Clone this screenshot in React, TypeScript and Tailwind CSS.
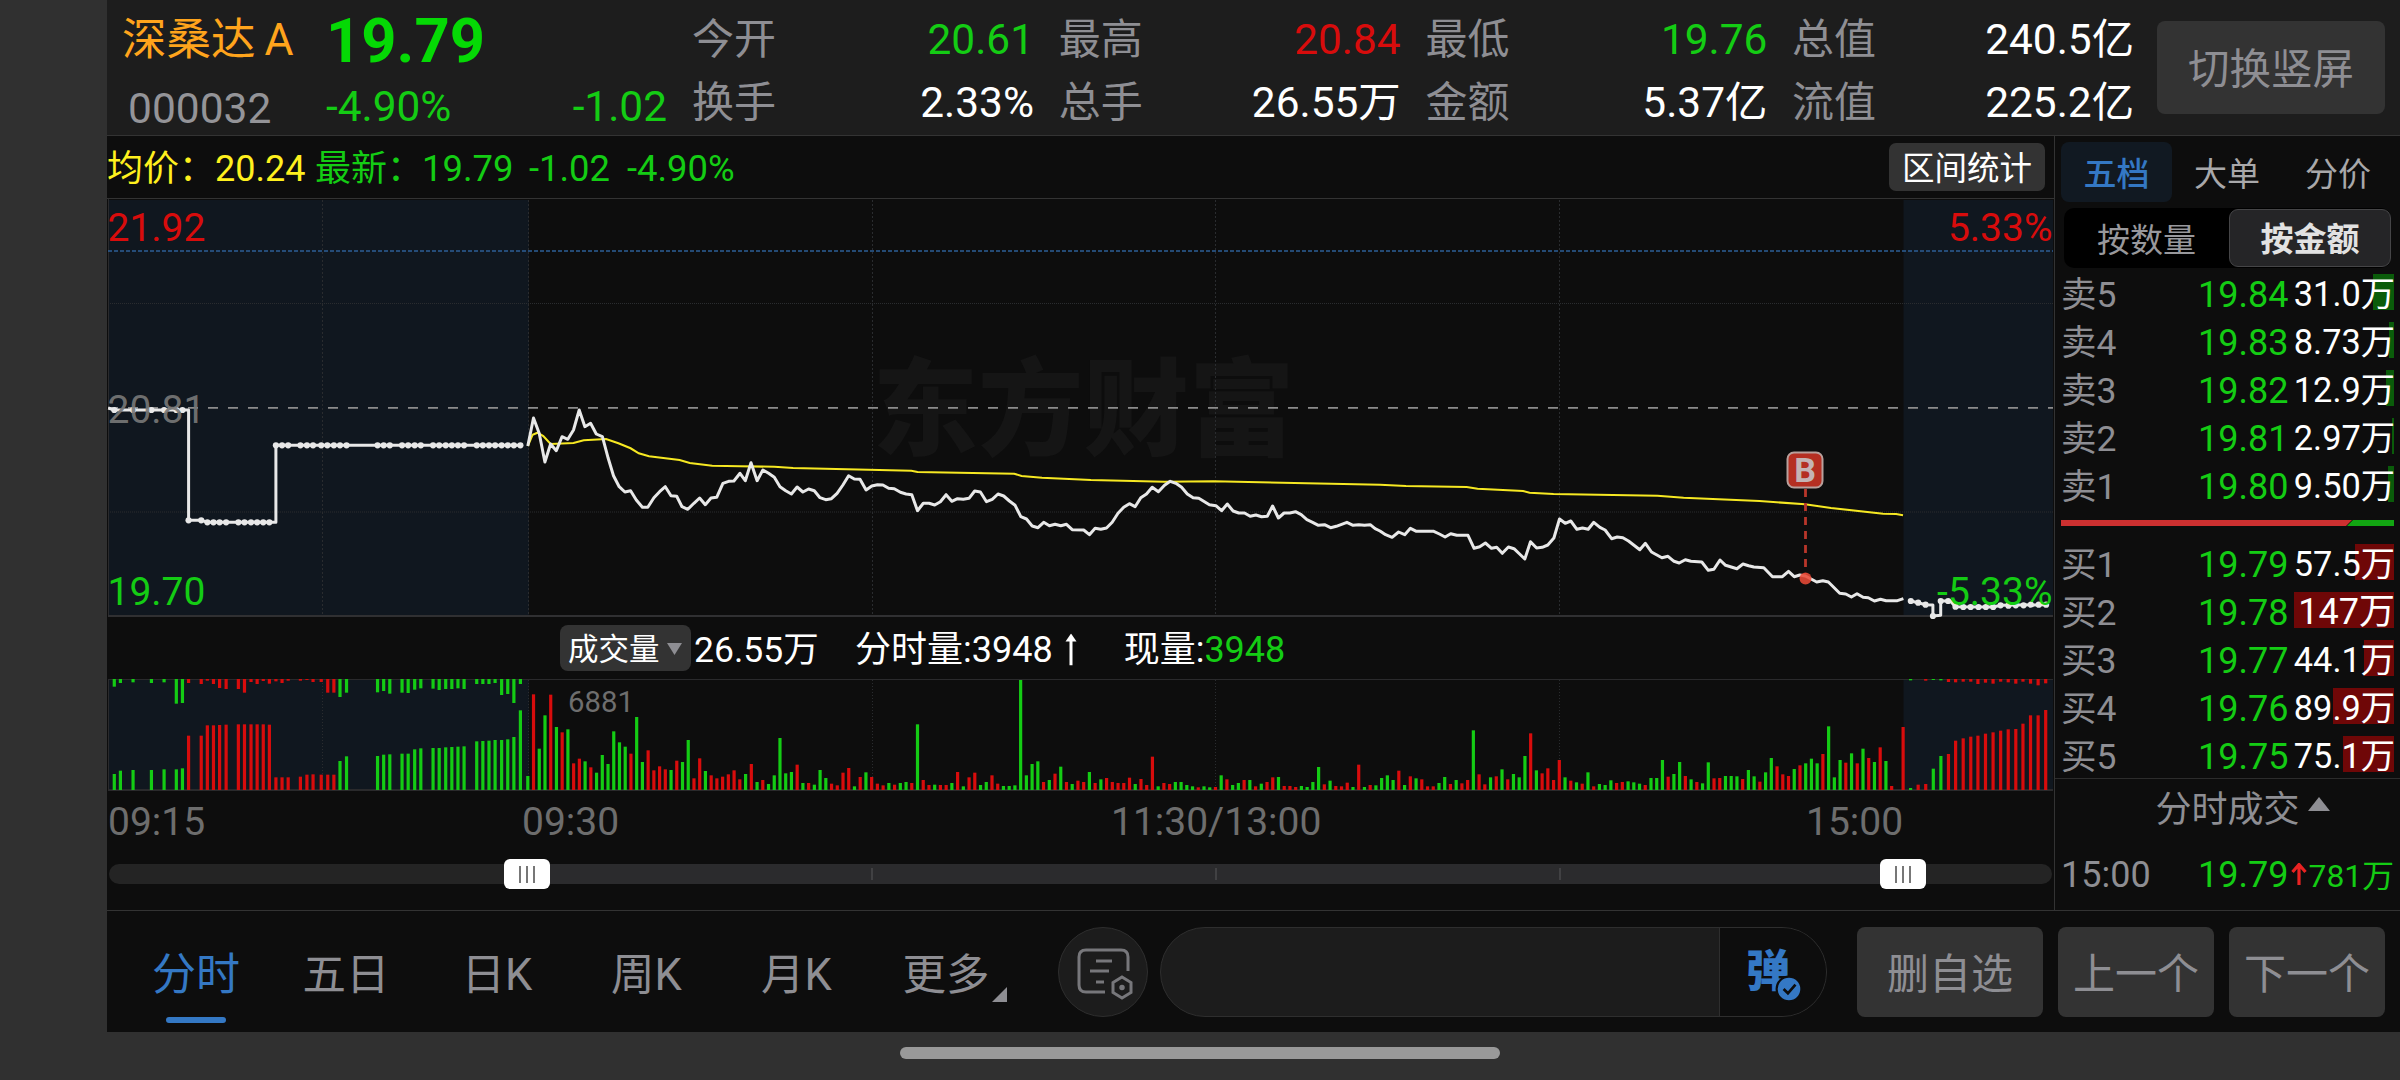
import React from "react";

type Pt = [number, number];

const GREEN = "#14cc14";
const RED = "#d80c0c";

/** Parses "x,y x,y ..." and maps it from local units to chart pixels. */
function plot(data: string, x0: number, sx: number, y0: number): Pt[] {
  return data
    .trim()
    .split(/\s+/)
    .map((p) => {
      const [x, y] = p.split(",").map(Number);
      return [x0 + x * sx, y0 + y / 3] as Pt;
    });
}

const join = (pts: Pt[]) => pts.map(([x, y]) => `${x.toFixed(1)},${y.toFixed(1)}`).join(" ");

const price: Pt[] = [
  ...plot(
    "1048,348 1062,264 1076,310 1090,396 1104,342 1118,362 1132,320 1146,328 1160,300 1174,240 1188,290 1202,280 1216,312 1231,320 1245,385 1258,437 1272,470 1286,486 1300,482 1314,510 1329,532 1342,532 1357,503 1371,485 1385,470 1399,497 1413,499 1426,530 1440,538 1455,520 1469,504 1483,524 1497,504 1511,502 1526,460 1540,454 1553,453",
    100, 0.40816, 330,
  ),
  ...plot(
    "0,430 13,452 27,398 42,452 56,420 70,430 84,442 98,470 112,482 126,492 140,471 154,486 168,477 182,482 196,503 210,509 224,506 238,490 252,465 266,437 280,447 294,448 309,480 323,468 337,464 350,465 364,475 378,476 393,487 407,492 421,494 435,542 449,520 463,520 477,525 491,515 505,494 519,514 533,506 547,508 561,505 575,483 589,486 604,515 618,508 632,492 646,498 660,513 674,526 688,560 702,567 716,588 730,593 744,577 758,587 772,583 786,587 800,583 814,599 842,600 856,614 870,595 884,598 898,594 912,577 926,550 940,532 954,521 968,530 982,503 996,492 1010,472 1025,485 1040,466 1054,454 1068,460 1082,472 1096,492 1110,503 1124,505 1150,524 1166,527 1180,542 1194,522 1208,543 1222,549 1236,549 1250,559 1264,555 1278,560 1292,559 1305,528 1319,564 1333,549 1347,549 1361,545 1375,554 1389,569 1403,577 1417,586 1432,584 1447,593 1461,589 1487,577 1502,586 1516,584 1530,586 1544,584 1556,596",
    740, 0.40816, 330,
  ),
  ...plot(
    "0,603 13,614 28,622 43,606 57,614 70,595 84,604 124,604 137,612 150,621 163,611 177,616 203,616 217,655 230,650 243,639 257,655 269,652 282,670 296,651 309,656 322,672 334,687 347,635 361,654 374,652 387,645 401,624 414,567 427,580 440,573 454,598 467,594 480,598 493,577 507,592 519,600 534,626 547,621 560,623 573,633 599,659 612,640 626,666 650,683 664,679 678,694 690,699 704,689 717,694 742,696 757,721 770,718 784,690 797,706 823,716 837,702 850,707 862,711 885,713 905,740 928,740 942,724 955,740 968,735 981,738 1007,756 1021,752 1034,756 1060,790 1074,792 1087,801 1100,791 1114,802 1126,803 1140,813 1154,808 1167,812 1193,812 1207,806",
    1380, 0.43367, 330,
  ),
];

const average: Pt[] = [
  ...plot("1048,348 1060,314 1072,308 1086,318 1104,342 1160,339 1185,331 1240,327 1270,340 1300,355 1320,370 1345,379 1420,390 1445,399 1500,407", 100, 0.40816, 330),
  ...plot("0,409 84,410 130,414 420,422 435,426 672,431 690,438 740,443 860,450 1040,455 1160,454", 740, 0.40816, 330),
  ...plot("0,464 60,468 200,471 225,476 330,483 345,488 400,492 640,497 700,503 875,513 980,523 1040,534 1160,551 1190,552 1206,556", 1380, 0.43367, 330),
];

const preLine = plot("20,234 35,240 217,240 217,571 250,571 263,577 431,577 431,346 1036,346", 100, 0.40816, 330);
const preDots = [
  ...plot("35,240 81,240 126,240 157,240 187,240 202,240 217,571 248,571", 100, 0.40816, 330),
  ...plot("263,577 278,577 293,577 309,577 339,577 354,577 370,577 385,577 400,577 415,577", 100, 0.40816, 330),
  ...plot("431,346 446,346 461,346 491,346 507,346 522,346 542,346 557,346 573,346 588,346 604,346 680,346 695,346 710,346 740,346 755,346 771,346 786,346 816,346 831,346 847,346 862,346 877,346 892,346 923,346 938,346 953,346 968,346 984,346 999,346 1014,346 1030,346", 100, 0.40816, 330),
];
const postLine = plot("1224,813 1241,818 1258,824 1275,825 1275,858 1293,856 1293,813 1315,813 1327,830 1414,831 1431,826 1536,824", 1380, 0.43367, 330);
const postDots = plot(
  "1224,813 1241,818 1258,824 1275,858 1293,813 1310,813 1327,830 1345,831 1362,831 1380,831 1397,831 1414,831 1431,826 1449,827 1466,826 1484,826 1501,824 1519,824 1536,824",
  1380, 0.43367, 330,
);

type Bar = { x: number; top: number; bottom: number; up: boolean };
const BASE = 790;
const CEIL = 679;

/** One volume bar per minute; each token is a colour letter and the bar's top. */
function minuteBars(data: string, start: number, step: number): Bar[] {
  return data
    .trim()
    .split(/\s+/)
    .map((t, i) => ({
      x: start + i * step,
      top: 620 + Number(t.slice(1)) / 3,
      bottom: BASE,
      up: t[0] === "r",
    }));
}

/** Auction bars: "x,colour,upperEnd,lowerTop" for matched and unmatched volume. */
function auctionBars(data: string, x0: number, sx: number): Bar[] {
  return data
    .trim()
    .split(/\s+/)
    .flatMap((t) => {
      const [x, c, hi, lo] = t.split(",");
      const px = x0 + Number(x) * sx;
      const up = c === "r";
      const out: Bar[] = [{ x: px, top: 620 + Number(lo) / 3, bottom: BASE, up }];
      if (Number(hi) > 0) out.push({ x: px, top: CEIL, bottom: 620 + Number(hi) / 3, up });
      return out;
    });
}

const bars: Bar[] = [
  ...auctionBars(
    "35,g,200,462 50,g,189,452 81,g,187,450 126,g,189,450 157,g,187,448 187,g,251,448 202,g,249,445 217,r,189,347 248,r,192,347 263,r,182,316 278,r,192,316 293,r,204,315 309,r,207,314 339,r,207,313 354,r,218,313 370,r,186,313 385,r,192,313 400,r,183,313 415,r,191,314 431,r,184,472 446,r,189,472 461,r,182,472 491,r,182,470 507,r,180,464 522,r,186,463 542,r,186,464 558,r,218,464 573,r,218,464 588,g,231,423 604,g,218,409 680,g,217,408 695,g,213,404 710,g,221,403 740,g,218,401 755,g,219,401 771,g,209,388 786,g,205,385 816,g,206,384 831,g,210,384 847,g,207,382 862,g,207,381 877,g,205,380 892,g,207,379 923,g,192,364 938,g,192,363 953,g,192,362 968,g,189,360 984,g,225,360 999,g,222,358 1014,g,249,351 1030,g,192,271",
    100, 0.40816,
  ),
  ...minuteBars(
    "g468 r223 g386 g286 r224 g321 r337 g328 r430 r416 g424 r442 g458 g405 g432 g334 g367 g380 r401 g291 g426 r391 r451 r439 r448 g450 r422 g426 g360 r475 r415 g453 r466 r475 r470 r463 r451 r478",
    527.8, 5.73,
  ),
  ...minuteBars(
    "g462 r432 g486 r480 g492 g466 g354 g460 g456 r434 g489 r489 g494 g450 g474 r491 r496 r458 r444 g499 r471 g457 r471 r491 r496 g489 r494 g489 g486 r489 g313 r480 r495 g494 r495 r495 g489 r456 g499 r472 r458 g495 g486 r466 r491 g498 g498 g496 g180 g466 g432 g424 r486 g480 r461 g440 r486 g492 r482 r486 g456 r489 g478 r474 r486 r489 r489 r473 g492 r477 r495 r410 g499 r489 r492 g486 g486 g495 g499 r502 g499 g502 r501 g466 r478 g495 g489 r480 g480 r499 g491 r486 r472 g471 r498 r498 r501 g498 g501 g486 g441 r493 g482 r498 r499 r488 g501 r434 g501 r495 g496 g474 g466 g480 r452",
    745.6, 5.73,
  ),
  ...minuteBars(
    "g495 r469 g475 r478 r499 r499 g489 g471 r492 g480 r490 r480 g331 r463 r493 g472 r469 g448 r478 g462 g472 g408 r340 g451 r460 r445 r480 r420 g472 r482 g487 r491 g457 r499 g492 g495 g481 r489 r486 g484 g487 g491 r495 g474 g474 g420 r470 g462 g426 r468 g478 r486 g490 g427 r475 r474 g468 g468 g469 r477 g450 g469 r485 g457 g414 r439 r463 r468 g447 r436 g430 g416 g430 r402 g319 g472 g420 r428 g400 r430 g386 r414 g426 r382 g423 r498 r510 r321",
    1404.6, 5.73,
  ),
  ...auctionBars(
    "1213,g,181,504 1231,r,0,494 1249,r,182,492 1267,g,180,446 1285,g,181,408 1303,r,186,402 1320,r,187,362 1338,r,185,355 1356,r,185,350 1373,r,192,347 1391,r,188,341 1409,r,191,337 1427,r,185,332 1445,r,187,328 1463,r,191,327 1480,r,185,311 1498,r,191,286 1516,r,196,286 1534,r,190,270",
    1400, 0.42092,
  ),
];

const GRID_X = [322.5, 528.5, 872.5, 1215.5, 1559.5];

const stats = [
  { label: "今开", value: "20.61", tone: "text-[#14cc14]", label2: "换手", value2: "2.33%" },
  { label: "最高", value: "20.84", tone: "text-[#d80c0c]", label2: "总手", value2: "26.55万" },
  { label: "最低", value: "19.76", tone: "text-[#14cc14]", label2: "金额", value2: "5.37亿" },
  { label: "总值", value: "240.5亿", tone: "text-white", label2: "流值", value2: "225.2亿" },
];

const asks = [
  { name: "卖5", price: "19.84", qty: "31.0万", depth: 21 },
  { name: "卖4", price: "19.83", qty: "8.73万", depth: 5 },
  { name: "卖3", price: "19.82", qty: "12.9万", depth: 8 },
  { name: "卖2", price: "19.81", qty: "2.97万", depth: 2 },
  { name: "卖1", price: "19.80", qty: "9.50万", depth: 6 },
];
const bids = [
  { name: "买1", price: "19.79", qty: "57.5万", depth: 39 },
  { name: "买2", price: "19.78", qty: "147万", depth: 100 },
  { name: "买3", price: "19.77", qty: "44.1万", depth: 30 },
  { name: "买4", price: "19.76", qty: "89.9万", depth: 61 },
  { name: "买5", price: "19.75", qty: "75.1万", depth: 51 },
];

function Header() {
  return (
    <header className="flex h-[136px] shrink-0 border-b border-[#333] bg-[#1d1d1d] text-[42px]">
      <div className="w-[219px] pl-[15px]">
        <div className="mt-[12px] h-[56px] text-[44.5px] leading-[56px] whitespace-nowrap text-[#ffa41c]">
          深桑达<span className="ml-[9px]">A</span>
        </div>
        <div className="mt-[13px] pl-[6px] text-[42.5px] leading-[56px] text-[#949498]">000032</div>
      </div>
      <div className="w-[341px]">
        <div className="mt-[9px] h-[64px] text-[61.5px] leading-[64px] font-bold text-[#05d905]">19.79</div>
        <div className="mt-[6px] flex justify-between text-[42.4px] leading-[56px] text-[#14cc14]">
          <span>-4.90%</span>
          <span>-1.02</span>
        </div>
      </div>
      <div className="ml-[25px] flex gap-[24.7px]">
        {stats.map((s) => (
          <div key={s.label} className="w-[342px]">
            <div className="mt-[12px] flex justify-between leading-[56px]">
              <span className="text-[#8e8e93]">{s.label}</span>
              <span className={`text-[42.4px] ${s.tone}`}>{s.value}</span>
            </div>
            <div className="mt-[7px] flex justify-between leading-[56px]">
              <span className="text-[#8e8e93]">{s.label2}</span>
              <span className="text-[42.4px] text-white">{s.value2}</span>
            </div>
          </div>
        ))}
      </div>
      <button className="mt-[21px] mr-[15px] ml-auto h-[93px] w-[228px] rounded-[8px] bg-[#333] pt-[6px] text-[41.5px] text-[#8e8e93]">
        切换竖屏
      </button>
    </header>
  );
}

function PriceChart() {
  return (
    <svg className="block h-[418px] w-[1947px] shrink-0 overflow-visible" viewBox="107 199 1947 418">
      <rect x="108" y="200" width="421" height="416" fill="#10171f" />
      <rect x="1903.5" y="200" width="149.5" height="416" fill="#10171f" />
      <text x="1083.5" y="447" textAnchor="middle" fontSize="105.5" fontWeight="900" fill="#151515">
        东方财富
      </text>
      <g stroke="#2a2c2f" strokeWidth="1" strokeDasharray="2 2">
        {GRID_X.map((x) => (
          <line key={x} x1={x} x2={x} y1="200" y2="616" />
        ))}
        <line x1="108" x2="2053" y1="303.5" y2="303.5" strokeDasharray="1 1" />
        <line x1="108" x2="2053" y1="512" y2="512" strokeDasharray="1 1" />
      </g>
      <line x1="108.5" x2="108.5" y1="199" y2="616" stroke="#2a2a2c" />
      <line x1="108" x2="2053" y1="251" y2="251" stroke="#2d5f96" strokeWidth="1.3" strokeDasharray="4 2" />
      <line x1="108" x2="2053" y1="407.8" y2="407.8" stroke="#8c8c8c" strokeWidth="1.8" strokeDasharray="10 10" />
      <line x1="108" x2="2053" y1="616" y2="616" stroke="#303032" strokeWidth="2" />
      <polyline points={join(average)} fill="none" stroke="#f6e822" strokeWidth="2.1" />
      <g fill="none" stroke="#e8e8e8" strokeWidth="3" strokeLinejoin="round">
        <polyline points={join(price)} />
        <polyline points={join(preLine)} />
        <polyline points={join(postLine)} />
      </g>
      <g fill="#e8e8e8">
        {[...preDots, ...postDots].map(([x, y], i) => (
          <circle key={i} cx={x} cy={y} r="3.1" />
        ))}
      </g>
      <line x1="1805.5" x2="1805.5" y1="489" y2="574" stroke="#b8362a" strokeWidth="2.8" strokeDasharray="8 6" />
      <circle cx="1805.5" cy="578.5" r="6" fill="#e84a37" fillOpacity="0.88" />
      <rect x="1787.5" y="452.5" width="35" height="35" rx="6.5" fill="#b52f22" stroke="#b8a09c" strokeWidth="2" />
      <text x="1805" y="482" textAnchor="middle" fontSize="34" fontWeight="700" fill="#c4b4b4">B</text>
      <g fontSize="39">
        <text x="107.5" y="241" fill={RED}>21.92</text>
        <text x="107.5" y="423" fill="#777" fillOpacity="0.92">20.81</text>
        <text x="107.5" y="605" fill={GREEN}>19.70</text>
        <text x="2052.5" y="241" textAnchor="end" fill={RED}>5.33%</text>
        <text x="2052.5" y="605" textAnchor="end" fill={GREEN}>-5.33%</text>
      </g>
    </svg>
  );
}

function VolumeChart() {
  return (
    <svg className="block h-[113px] w-[1947px] shrink-0" viewBox="107 679 1947 113">
      <rect x="108" y="680" width="421" height="110" fill="#10171f" />
      <rect x="1903.5" y="680" width="149.5" height="110" fill="#10171f" />
      <g stroke="#2a2c2f" strokeDasharray="1 2">
        {GRID_X.map((x) => (
          <line key={x} x1={x} x2={x} y1="680" y2="790" />
        ))}
      </g>
      <line x1="108" x2="2053" y1="679.5" y2="679.5" stroke="#2a2a2c" />
      <line x1="108.5" x2="108.5" y1="679" y2="791" stroke="#2a2a2c" />
      <line x1="108" x2="2053" y1="790" y2="790" stroke="#2a2a2c" strokeWidth="2" />
      {bars.map((b, i) => (
        <rect key={i} x={b.x - 1.6} y={b.top} width="3.2" height={Math.max(0, b.bottom - b.top)} fill={b.up ? RED : GREEN} />
      ))}
      <text x="568" y="712" fontSize="29.3" fill="#6e6e6e">6881</text>
    </svg>
  );
}

function Thumb() {
  return (
    <div className="flex h-[30px] w-[46px] shrink-0 items-center justify-center gap-[5px] rounded-[6px] bg-white">
      <i className="h-[17px] w-[2px] bg-[#777]" />
      <i className="h-[17px] w-[2px] bg-[#777]" />
      <i className="h-[17px] w-[2px] bg-[#777]" />
    </div>
  );
}

function RangeSlider() {
  return (
    <div className="mt-[12px] flex h-[30px] w-[1947px] items-center pl-[2px]">
      <div className="h-[20px] w-[395px] shrink-0 rounded-l-full bg-[#242424]" />
      <Thumb />
      <div className="flex h-[20px] w-[1330px] shrink-0 items-center bg-[#2b2b2d]">
        <i className="ml-[321px] h-[12px] w-[2px] bg-[#414143]" />
        <i className="ml-[342px] h-[12px] w-[2px] bg-[#414143]" />
        <i className="ml-[342px] h-[12px] w-[2px] bg-[#414143]" />
      </div>
      <Thumb />
      <div className="h-[20px] w-[126px] shrink-0 rounded-r-full bg-[#242424]" />
    </div>
  );
}

function ChartPanel() {
  return (
    <section className="flex w-[1947px] shrink-0 flex-col">
      <div className="flex h-[63px] shrink-0 items-center border-b border-[#333] text-[36px] leading-[62px] whitespace-pre">
        <div className="flex translate-y-[1.5px] text-[#14cc14]">
          <span className="w-[208px] text-[#fff01e]">均价：20.24</span>
          <span className="w-[107px]">最新：</span>
          <span className="w-[107px] text-[36.4px]">19.79</span>
          <span className="w-[98px] text-[36.4px]">-1.02</span>
          <span className="text-[36.4px]">-4.90%</span>
        </div>
        <button className="mr-[9px] ml-auto h-[48px] w-[156px] rounded-[7px] bg-[#333] pt-[2px] text-[32.5px] leading-[48px] text-white">
          区间统计
        </button>
      </div>
      <PriceChart />
      <div className="flex h-[62px] shrink-0 items-center pl-[453px] text-[36px] leading-[62px] text-white">
        <button className="flex h-[46px] w-[131px] shrink-0 items-center rounded-[8px] bg-[#333] pt-[3px] pl-[8px] text-[30.5px] leading-[44px]">
          成交量
          <svg className="mb-[2px] ml-[7px] h-[12px] w-[15px]" viewBox="0 0 15 12">
            <path d="M0 0h15L7.500 12z" fill="#8e8e93" />
          </svg>
        </button>
        <div className="flex flex-1 translate-y-[1.5px] items-center">
          <span className="ml-[3px] w-[161px] text-[35.5px]">26.55万</span>
          <span>分时量:3948</span>
          <svg className="mb-[1px] ml-[12px] h-[32px] w-[12px]" viewBox="0 0 12 32">
            <path d="M6 0l5.500 8H.5z" fill="#fff" />
            <path d="M6 5v27" stroke="#fff" strokeWidth="3" />
          </svg>
          <span className="ml-[47px]">现量:</span>
          <span className="text-[#14cc14]">3948</span>
        </div>
      </div>
      <VolumeChart />
      <div className="relative h-[55px] shrink-0 text-[39px] leading-[61px] text-[#6d6d6d]">
        <span className="absolute left-px">09:15</span>
        <span className="absolute left-[415px]">09:30</span>
        <span className="absolute left-[1004px]">11:30/13:00</span>
        <span className="absolute left-[1699px]">15:00</span>
      </div>
      <RangeSlider />
    </section>
  );
}

type Level = { name: string; price: string; qty: string; depth: number };

function BookRow({ level, tone }: { level: Level; tone: string }) {
  return (
    <div className="relative flex h-[48px] items-center text-[36px] leading-[48px]">
      <span className="w-[137px] translate-y-[2.5px] text-[35.5px] text-[#8e8e93]">{level.name}</span>
      <span className="translate-y-[2.5px] text-[#14cc14]">{level.price}</span>
      <span className={`absolute top-[6px] right-[6px] h-[36px] ${tone}`} style={{ width: level.depth }} />
      <span
        className={`relative mr-[5px] ml-auto translate-y-[1.5px] text-white ${level.qty.length > 4 ? "text-[34.3px]" : "text-[36px]"}`}
      >
        {level.qty}
      </span>
    </div>
  );
}

function OrderPanel() {
  return (
    <aside className="flex flex-1 flex-col border-l border-[#333] pl-[6px]">
      <div className="mt-[6px] flex h-[60px] shrink-0 text-[33px] leading-[65px] text-[#a8a8aa]">
        <span className="h-[60px] w-[111px] rounded-[8px] bg-[#111922] text-center font-medium text-[#3478c4]">五档</span>
        <span className="ml-[22px]">大单</span>
        <span className="ml-[45px]">分价</span>
      </div>
      <div className="mt-[6px] ml-[3px] flex h-[60px] w-[327px] shrink-0 rounded-[10px] bg-black text-center text-[33px] leading-[65px] text-[#98989c]">
        <span className="w-[165px]">按数量</span>
        <span className="my-px h-[58px] w-[162px] rounded-[9px] border border-[#454547] bg-[#252527] leading-[60px] font-bold text-[#e2e2e2]">
          按金额
        </span>
      </div>
      <div className="h-[240px] shrink-0">
        {asks.map((l) => (
          <BookRow key={l.name} level={l} tone="bg-[#0a5c0a]" />
        ))}
      </div>
      <svg className="mt-[12px] h-[6px] w-[333px] shrink-0" viewBox="0 0 333 6">
        <path d="M0 0h291l-6 6H0z" fill="#cc3030" />
        <path d="M292 0h41v6H286z" fill="#12a512" />
      </svg>
      <div className="mt-[12px] h-[240px] shrink-0">
        {bids.map((l) => (
          <BookRow key={l.name} level={l} tone="bg-[#6f0707]" />
        ))}
      </div>
      <div className="-ml-[6px] flex h-[61px] shrink-0 items-start justify-center border-t border-[#2c2c2c] text-[36px] leading-[63px] text-[#8e8e93]">
        <span className="ml-[30px]">分时成交</span>
        <svg className="mt-[18px] ml-[8px] h-[14px] w-[22px]" viewBox="0 0 22 14">
          <path d="M11 0l11 14H0z" fill="#8e8e93" />
        </svg>
      </div>
      <div className="mt-[12px] flex h-[48px] items-center text-[36px] leading-[48px]">
        <span className="w-[137px] text-[#8e8e93]">15:00</span>
        <span className="text-[#14cc14]">19.79</span>
        <svg className="mb-[3px] ml-[3px] h-[22px] w-[16px]" viewBox="0 0 16 22">
          <path d="M8 22V2M1.500 9L8 1.500 14.500 9" fill="none" stroke="#e82222" strokeWidth="3.200" />
        </svg>
        <span className="mr-[6px] ml-auto translate-y-px text-[31.8px] text-[#14cc14]">781万</span>
      </div>
    </aside>
  );
}

function BottomBar() {
  return (
    <footer className="flex h-[122px] shrink-0 items-start border-t border-[#333] pt-[16px] text-[43.5px] text-[#8e8e93]">
      <nav className="ml-[14px] flex text-center leading-[97px]">
        <span className="relative w-[150px] text-[44px] text-[#3478c4]">
          分时
          <i className="absolute top-[90px] left-[45px] h-[6px] w-[60px] rounded-full bg-[#3478c4]" />
        </span>
        <span className="w-[150px]">五日</span>
        <span className="w-[150px] pl-[2px]">日K</span>
        <span className="w-[150px] pl-px">周K</span>
        <span className="w-[150px] pl-px">月K</span>
        <span className="relative w-[150px]">
          更多
          <svg className="absolute top-[60px] left-[121px] h-[15px] w-[15px]" viewBox="0 0 15 15">
            <path d="M15 0v15H0z" fill="#8e8e93" />
          </svg>
        </span>
      </nav>
      <button className="ml-[37px] flex h-[90px] w-[90px] items-center justify-center rounded-full border border-[#2e2e2e] bg-[#1c1c1c]">
        <svg className="mt-[2px] ml-[4px] h-[54px] w-[58px]" viewBox="0 0 58 54" fill="none" stroke="#77777b" strokeWidth="3">
          <path d="M52 25V11q0-7-7-7H10Q3 4 3 11v28q0 7 7 7h19" />
          <path d="M20 15h16M14 25h19M20 36h8" />
          <path d="M46 31l9 5.500v10L46 52l-9-5.500v-10z" />
          <circle cx="46" cy="41.500" r="2" fill="#77777b" strokeWidth="1.500" />
        </svg>
      </button>
      <div className="ml-[12px] flex h-[90px] w-[667px] overflow-hidden rounded-full border border-[#2e2e2e] bg-[#1c1c1c]">
        <div className="relative ml-auto h-full w-[107px] border-l border-[#2e2e2e] bg-[#0d0d0d]">
          <span className="absolute top-0 left-[26px] text-[44px] leading-[88px] font-black text-[#3478c4]">弹</span>
          <svg className="absolute top-[47px] left-[55px] h-[28px] w-[28px]" viewBox="0 0 26 26">
            <circle cx="13" cy="13" r="11.500" fill="#3478c4" stroke="#0d0d0d" strokeWidth="2" />
            <path d="M8 13l4 4 7-8" fill="none" stroke="#0d0d0d" strokeWidth="2.500" />
          </svg>
        </div>
      </div>
      <button className="ml-[30px] h-[90px] w-[186px] rounded-[8px] bg-[#333] pt-[5px] text-[42px]">删自选</button>
      <button className="ml-[15px] h-[90px] w-[156px] rounded-[8px] bg-[#333] pt-[5px] text-[42px]">上一个</button>
      <button className="ml-[15px] h-[90px] w-[156px] rounded-[8px] bg-[#333] pt-[5px] text-[42px]">下一个</button>
    </footer>
  );
}

export default function App() {
  return (
    <div className="flex h-[1080px] w-[2400px] flex-col overflow-hidden bg-[#303030] pl-[107px] font-[Roboto,'Noto_Sans_CJK_SC',sans-serif]">
      <div className="flex h-[1032px] shrink-0 flex-col bg-[#0d0d0d]">
        <Header />
        <div className="flex h-[774px] shrink-0">
          <ChartPanel />
          <OrderPanel />
        </div>
        <BottomBar />
      </div>
      <div className="mt-[15px] ml-[793px] h-[12px] w-[600px] rounded-full bg-[#999]" />
    </div>
  );
}
